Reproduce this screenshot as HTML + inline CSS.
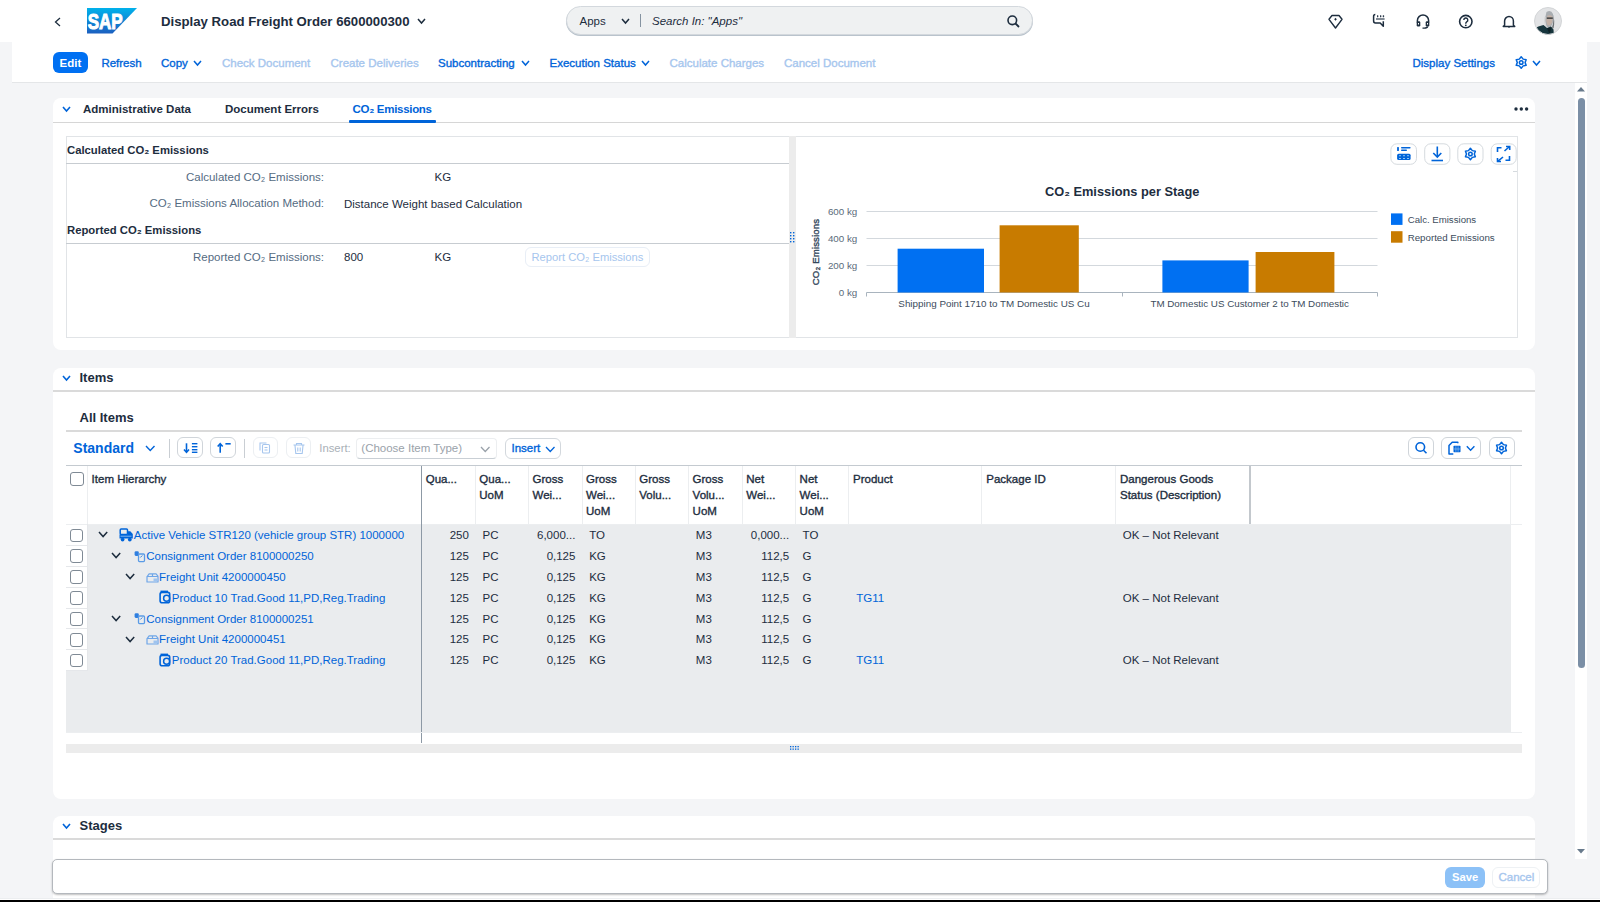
<!DOCTYPE html>
<html><head><meta charset="utf-8">
<style>
*{box-sizing:border-box;margin:0;padding:0}
html,body{width:1600px;height:902px;overflow:hidden}
body{position:relative;background:#f4f5f7;font-family:"Liberation Sans",sans-serif;color:#1d2d3e;font-size:11.5px}
.a{position:absolute}
.t{position:absolute;white-space:nowrap;line-height:1}
.sb{-webkit-text-stroke:0.35px currentColor}
.lnk{color:#0064d9}
.dis{color:#a6c6ee}
.lbl{color:#556b82}
.b{font-weight:bold}
svg{position:absolute;overflow:visible}
</style></head><body>

<!-- SHELL BAR -->
<div class="a" style="left:0;top:0;width:1600px;height:42px;background:#fff"></div>
<svg style="left:54px;top:17px" width="8" height="10"><polyline points="6,1 1.5,5 6,9" fill="none" stroke="#1d2d3e" stroke-width="1.3"/></svg>
<svg style="left:87px;top:8px" width="50" height="26">
 <defs><linearGradient id="sapg" x1="0" y1="0" x2="0" y2="1"><stop offset="0" stop-color="#00b1eb"/><stop offset="1" stop-color="#1c5fc0"/></linearGradient></defs>
 <polygon points="0,0 50,0 25.5,25.5 0,25.5" fill="url(#sapg)"/>
 <text x="0.7" y="21" font-family="Liberation Sans" font-weight="bold" font-size="22" fill="#fff" stroke="#fff" stroke-width="1" textLength="35" lengthAdjust="spacingAndGlyphs">SAP</text>
</svg>
<div class="t b" style="left:161px;top:15px;font-size:13.2px;color:#1d2d3e">Display Road Freight Order 6600000300</div>
<svg style="left:417px;top:18px" width="10" height="7"><polyline points="1,1 4.5,5 8,1" fill="none" stroke="#1d2d3e" stroke-width="1.5"/></svg>

<!-- search -->
<div class="a" style="left:566px;top:6px;width:467px;height:29.2px;border-radius:15px;background:#eff1f2;border:1px solid #d3d8dd;box-shadow:0 1px 0 #b9c3cc"></div>
<div class="t" style="left:579.5px;top:16px;font-size:11.5px">Apps</div>
<svg style="left:621px;top:18px" width="10" height="7"><polyline points="1,1 4.5,5 8,1" fill="none" stroke="#1d2d3e" stroke-width="1.5"/></svg>
<div class="a" style="left:640px;top:14px;width:1.2px;height:13px;background:#8593a1"></div>
<div class="t" style="left:652px;top:16px;font-size:11.5px;font-style:italic;color:#1d2d3e">Search In: "Apps"</div>
<svg style="left:1007px;top:15px" width="13" height="13"><circle cx="5.3" cy="5.3" r="4.3" fill="none" stroke="#1d2d3e" stroke-width="1.6"/><line x1="8.5" y1="8.5" x2="12" y2="12" stroke="#1d2d3e" stroke-width="1.8"/></svg>

<!-- shell icons -->
<svg style="left:1328px;top:14px" width="16" height="16"><path d="M4 1.5h7l3 3.8L7.5 14 1 5.3z" fill="none" stroke="#1d2d3e" stroke-width="1.4" stroke-linejoin="round"/><path d="M7.5 3.8l1.3 1.5-1.3 1.5-1.3-1.5z" fill="#1d2d3e"/></svg>
<svg style="left:1372px;top:13px" width="15" height="15"><path d="M3.3 1.4Q1.6 1.4 1.6 3.2V8.1Q1.6 10 3.4 10H8.2L11.3 13.3V8.3" fill="none" stroke="#1d2d3e" stroke-width="1.5" stroke-linejoin="round"/><path d="M4 6h8.6" stroke="#1d2d3e" stroke-width="1.1"/><path d="M5 3.2h1.4M8 3.2h1.4M10.8 3.2h1.4M5.6 2.3v2M8.6 2.3v2M11.4 2.3v2" stroke="#1d2d3e" stroke-width=".9"/></svg>
<svg style="left:1416px;top:14px" width="14" height="16"><path d="M1.4 8.5V6.6a5.6 5.6 0 0 1 11.2 0V8.5" fill="none" stroke="#1d2d3e" stroke-width="1.5"/><rect x="0.7" y="7.3" width="3.6" height="5.2" rx="1.2" fill="#1d2d3e"/><rect x="9.7" y="7.3" width="3.6" height="5.2" rx="1.2" fill="#1d2d3e"/><rect x="2" y="9" width="1" height="1.5" fill="#fff"/><rect x="11" y="9" width="1" height="1.5" fill="#fff"/><path d="M11.7 12.5q-.5 1.6-3.4 1.6H6.5" fill="none" stroke="#1d2d3e" stroke-width="1.4"/></svg>
<svg style="left:1458px;top:14px" width="16" height="16"><circle cx="7.8" cy="7.6" r="6.2" fill="none" stroke="#1d2d3e" stroke-width="1.6"/><path d="M5.8 6a2 2 0 1 1 2.9 1.8c-.7.4-.9.8-.9 1.5v.5" fill="none" stroke="#1d2d3e" stroke-width="1.4"/><circle cx="7.8" cy="11.3" r=".9" fill="#1d2d3e"/></svg>
<svg style="left:1502px;top:14px" width="14" height="16"><path d="M2.6 11.3V7a4.4 4.4 0 0 1 8.8 0v4.3l1.3 1.1H1.3z" fill="none" stroke="#1d2d3e" stroke-width="1.5" stroke-linejoin="round"/><path d="M5.5 12.6l1.5 1.5 1.5-1.5z" fill="#1d2d3e"/></svg>
<svg style="left:1533.5px;top:7px" width="28" height="28"><defs><clipPath id="av"><circle cx="14" cy="14" r="13.5"/></clipPath></defs><g clip-path="url(#av)"><rect width="28" height="28" fill="#e2e3e5"/><path d="M12.5 5q4.5-2.5 6.5 2 .8 4-.2 9l-2.5 5-4-1.5-1.8-6z" fill="#a9adb1"/><path d="M13.5 8.5q3.5-.8 5 1.2l-.3 5.5-2.2 3.5-2.8-1-1-4.5z" fill="#c4b2a8"/><path d="M12.8 11.2h6" stroke="#23282c" stroke-width="1.3"/><path d="M11 10q-1 5 1.5 11" stroke="#d8d8d8" stroke-width="1.5" fill="none"/><path d="M0 22q4-3 9.5-4l3.5 3 4-1.5 2.5 3 .5 7.5H0z" fill="#17353d"/><path d="M13 21l2.5 6 2-6.5z" fill="#0f2228"/><path d="M18.7 6.5q1.8 6-.7 14l1.5 1q1.8-8-.8-15z" fill="#6f7478"/></g><circle cx="14" cy="14" r="13.5" fill="none" stroke="#d3d5d7" stroke-width="1"/></svg>

<!-- TOOLBAR -->
<div class="a" style="left:12px;top:42px;width:1575px;height:41px;background:#fff;border-bottom:1px solid #e4e6e8"></div>
<div class="a" style="left:52.5px;top:52px;width:35px;height:21px;border-radius:6px;background:#0070f2"></div>
<div class="t b" style="left:59.5px;top:58px;font-size:11.5px;color:#fff">Edit</div>
<div class="t lnk sb" style="left:101.4px;top:58px">Refresh</div>
<div class="t lnk sb" style="left:161px;top:58px">Copy</div>
<svg style="left:193px;top:60px" width="10" height="7"><polyline points="1,1 4.5,5 8,1" fill="none" stroke="#0064d9" stroke-width="1.5"/></svg>
<div class="t dis sb" style="left:222px;top:58px">Check Document</div>
<div class="t dis sb" style="left:330.5px;top:58px">Create Deliveries</div>
<div class="t lnk sb" style="left:438px;top:58px">Subcontracting</div>
<svg style="left:520.5px;top:60px" width="10" height="7"><polyline points="1,1 4.5,5 8,1" fill="none" stroke="#0064d9" stroke-width="1.5"/></svg>
<div class="t lnk sb" style="left:549.5px;top:58px">Execution Status</div>
<svg style="left:641px;top:60px" width="10" height="7"><polyline points="1,1 4.5,5 8,1" fill="none" stroke="#0064d9" stroke-width="1.5"/></svg>
<div class="t dis sb" style="left:669.5px;top:58px">Calculate Charges</div>
<div class="t dis sb" style="left:784px;top:58px">Cancel Document</div>
<div class="t lnk sb" style="left:1412.5px;top:58px">Display Settings</div>
<svg style="left:1514px;top:55px" width="15" height="15"><g transform="translate(7.2,7.5)" fill="none" stroke="#0064d9" stroke-width="1.5" stroke-linejoin="round"><circle r="1.8"/><path d="M0.00 -5.70 L1.95 -3.38 L4.94 -2.85 L3.90 0.00 L4.94 2.85 L1.95 3.38 L0.00 5.70 L-1.95 3.38 L-4.94 2.85 L-3.90 0.00 L-4.94 -2.85 L-1.95 -3.38Z"/></g></svg>
<svg style="left:1532px;top:60px" width="10" height="7"><polyline points="1,1 4.5,5 8,1" fill="none" stroke="#0064d9" stroke-width="1.5"/></svg>

<!-- right scrollbar -->
<div class="a" style="left:1575px;top:83px;width:12px;height:776px;background:#fff"></div>
<svg style="left:1577px;top:87px" width="9" height="5"><polygon points="4,0 8,4.5 0,4.5" fill="#687a8c"/></svg>
<div class="a" style="left:1577.5px;top:97.5px;width:7.5px;height:570px;border-radius:4px;background:#7b8fa6"></div>
<svg style="left:1577px;top:849px" width="9" height="5"><polygon points="0,0 8,0 4,4.5" fill="#687a8c"/></svg>

<!-- CARD 1 -->
<div class="a" style="left:52.5px;top:98.3px;width:1482px;height:252.2px;background:#fff;border-radius:8px"></div>
<div class="a" style="left:52.5px;top:121.8px;width:1482px;height:1.4px;background:#d6d6d6"></div>
<svg style="left:62px;top:106.3px" width="10" height="6"><polyline points="1,1 4.5,5 8,1" fill="none" stroke="#0064d9" stroke-width="1.6"/></svg>
<div class="t b" style="left:83px;top:104px;font-size:11.5px">Administrative Data</div>
<div class="t b" style="left:225px;top:104px;font-size:11.5px">Document Errors</div>
<div class="t b lnk" style="left:352.5px;top:104px;font-size:11.5px;letter-spacing:-0.3px">CO₂ Emissions</div>
<div class="a" style="left:349px;top:119.8px;width:86.5px;height:3px;background:#0064d9;border-radius:1px"></div>
<svg style="left:1514px;top:107px" width="15" height="4"><circle cx="2" cy="2" r="1.7" fill="#1d2d3e"/><circle cx="7.3" cy="2" r="1.7" fill="#1d2d3e"/><circle cx="12.6" cy="2" r="1.7" fill="#1d2d3e"/></svg>

<!-- form panel -->
<div class="a" style="left:66px;top:136px;width:724px;height:202px;border:1px solid #e1e4e7;border-right:none"></div>
<div class="t b" style="left:67px;top:145px;font-size:11.3px">Calculated CO₂ Emissions</div>
<div class="a" style="left:66px;top:162.5px;width:724px;height:1px;background:#c7ccd1"></div>
<div class="t lbl" style="right:1276px;top:171.7px;font-size:11.5px">Calculated CO₂ Emissions:</div>
<div class="t" style="left:434.5px;top:171.7px">KG</div>
<div class="t lbl" style="right:1276px;top:198.2px;font-size:11.5px">CO₂ Emissions Allocation Method:</div>
<div class="t" style="left:344px;top:198.9px">Distance Weight based Calculation</div>
<div class="t b" style="left:67px;top:225px;font-size:11.3px">Reported CO₂ Emissions</div>
<div class="a" style="left:66px;top:243px;width:724px;height:1px;background:#c7ccd1"></div>
<div class="t lbl" style="right:1276px;top:251.7px;font-size:11.5px">Reported CO₂ Emissions:</div>
<div class="t" style="left:344px;top:251.7px">800</div>
<div class="t" style="left:434.5px;top:251.7px">KG</div>
<div class="a" style="left:524.5px;top:247px;width:125px;height:20px;border:1px solid #e8eef6;border-radius:6px"></div>
<div class="t dis" style="left:531.5px;top:251.7px;font-size:11.2px">Report CO₂ Emissions</div>
<!-- splitter -->
<div class="a" style="left:789.2px;top:136px;width:6.4px;height:202px;background:#ececec"></div>
<svg style="left:790.3px;top:232px" width="6" height="11"><g fill="#0064d9"><rect x="0" y="0" width="1.4" height="1.4"/><rect x="3" y="0" width="1.4" height="1.4"/><rect x="0" y="3" width="1.4" height="1.4"/><rect x="3" y="3" width="1.4" height="1.4"/><rect x="0" y="6" width="1.4" height="1.4"/><rect x="3" y="6" width="1.4" height="1.4"/><rect x="0" y="9" width="1.4" height="1.4"/><rect x="3" y="9" width="1.4" height="1.4"/></g></svg>

<!-- chart panel -->
<div class="a" style="left:795.5px;top:136px;width:722.5px;height:202px;border:1px solid #e1e4e7;border-left:none"></div>
<svg style="left:0;top:0" width="1600" height="902">
<rect x="1390.9" y="143.8" width="25.59999999999991" height="20.5" rx="6" fill="#fff" stroke="#d5dade" stroke-width="1"/>
<rect x="1424.7" y="143.8" width="25.200000000000045" height="20.5" rx="6" fill="#fff" stroke="#d5dade" stroke-width="1"/>
<rect x="1457.8" y="143.8" width="25.200000000000045" height="20.5" rx="6" fill="#fff" stroke="#d5dade" stroke-width="1"/>
<rect x="1491.2" y="143.8" width="25.0" height="20.5" rx="6" fill="#fff" stroke="#d5dade" stroke-width="1"/>
<g fill="#0064d9"><rect x="1397.1" y="147" width="1.8" height="3.9" rx=".5"/><rect x="1401" y="147" width="9.6" height="1.5" rx=".7"/><rect x="1401" y="149.6" width="6" height="1.4" rx=".7"/><rect x="1397.1" y="153.7" width="13.5" height="6.3" rx="1.5"/></g>
<g fill="#9fd0f5"><rect x="1399" y="155.3" width="2" height=".9"/><rect x="1403" y="155.3" width="2" height=".9"/><rect x="1407" y="155.3" width="2" height=".9"/><rect x="1399" y="158" width="2" height=".9"/><rect x="1403" y="158" width="2" height=".9"/><rect x="1407" y="158" width="2" height=".9"/></g>
<g stroke="#0064d9" stroke-width="1.6" fill="none"><line x1="1437.3" y1="146.5" x2="1437.3" y2="157"/><polyline points="1433.3,153 1437.3,157 1441.3,153"/><line x1="1431.5" y1="160.5" x2="1443" y2="160.5"/></g>
<g transform="translate(1470.4,154)" fill="none" stroke="#0064d9" stroke-width="1.5"><circle r="1.8"/><path d="M0.00 -5.70 L1.95 -3.38 L4.94 -2.85 L3.90 0.00 L4.94 2.85 L1.95 3.38 L0.00 5.70 L-1.95 3.38 L-4.94 2.85 L-3.90 0.00 L-4.94 -2.85 L-1.95 -3.38Z" stroke-linejoin="round"/></g>
<g stroke="#0064d9" stroke-width="1.6" fill="none"><polyline points="1497.5,152 1497.5,147.8 1501.5,147.8"/><polyline points="1509.5,156 1509.5,160.3 1505.5,160.3"/><line x1="1504.5" y1="151" x2="1509.5" y2="146.5"/><polyline points="1506,146.5 1509.7,146.5 1509.7,150"/><line x1="1503" y1="157" x2="1497.7" y2="161.3"/><polyline points="1497.5,158 1497.5,161.5 1501,161.5"/></g>
<line x1="1513" y1="171.5" x2="1517" y2="171.5" stroke="#d5dade" stroke-width="1"/>
<text x="1045" y="196" font-family="Liberation Sans" font-weight="bold" font-size="12.8" fill="#1d2d3e">CO₂ Emissions per Stage</text>
<line x1="866.5" y1="211.5" x2="1377.5" y2="211.5" stroke="#d3d8dd" stroke-width="1"/>
<line x1="866.5" y1="238.5" x2="1377.5" y2="238.5" stroke="#d3d8dd" stroke-width="1"/>
<line x1="866.5" y1="265.5" x2="1377.5" y2="265.5" stroke="#d3d8dd" stroke-width="1"/>
<line x1="866.5" y1="292.5" x2="1377.5" y2="292.5" stroke="#a9b4be" stroke-width="1"/>
<line x1="866.5" y1="292.5" x2="866.5" y2="296.5" stroke="#a9b4be" stroke-width="1"/>
<line x1="1122.5" y1="292.5" x2="1122.5" y2="296.5" stroke="#a9b4be" stroke-width="1"/>
<line x1="1377.5" y1="292.5" x2="1377.5" y2="296.5" stroke="#a9b4be" stroke-width="1"/>
<text x="857.3" y="214.8" text-anchor="end" font-family="Liberation Sans" font-size="9.8" fill="#5b6b7b">600 kg</text>
<text x="857.3" y="241.8" text-anchor="end" font-family="Liberation Sans" font-size="9.8" fill="#5b6b7b">400 kg</text>
<text x="857.3" y="268.8" text-anchor="end" font-family="Liberation Sans" font-size="9.8" fill="#5b6b7b">200 kg</text>
<text x="857.3" y="295.8" text-anchor="end" font-family="Liberation Sans" font-size="9.8" fill="#5b6b7b">0 kg</text>
<text transform="translate(818.5,252) rotate(-90)" text-anchor="middle" font-family="Liberation Sans" font-size="9.6" fill="#33475b" stroke="#33475b" stroke-width="0.35" letter-spacing="0.15">CO₂ Emissions</text>
<rect x="897.6" y="248.7" width="86.4" height="43.8" fill="#0070f2"/>
<rect x="999.6" y="225.3" width="79.2" height="67.2" fill="#c87b00"/>
<rect x="1162.4" y="260.4" width="86.2" height="32.1" fill="#0070f2"/>
<rect x="1255.6" y="252" width="78.8" height="40.5" fill="#c87b00"/>
<text x="994" y="306.7" text-anchor="middle" font-family="Liberation Sans" font-size="9.85" fill="#3c4c5c">Shipping Point 1710 to TM Domestic US Cu</text>
<text x="1249.7" y="306.7" text-anchor="middle" font-family="Liberation Sans" font-size="9.8" fill="#3c4c5c">TM Domestic US Customer 2 to TM Domestic</text>
<rect x="1391" y="213.4" width="11.5" height="11.5" fill="#0070f2"/>
<rect x="1391" y="231.2" width="11.5" height="11.5" fill="#c87b00"/>
<text x="1407.7" y="222.8" font-family="Liberation Sans" font-size="9.65" fill="#3c4c5c">Calc. Emissions</text>
<text x="1407.7" y="240.6" font-family="Liberation Sans" font-size="9.73" fill="#3c4c5c">Reported Emissions</text>
</svg>

<!-- CARD 2 : Items -->
<div class="a" style="left:52.5px;top:367.5px;width:1482px;height:431.5px;background:#fff;border-radius:8px"></div>
<div class="a" style="left:52.5px;top:390px;width:1482px;height:2px;background:#dadada"></div>
<svg style="left:61.5px;top:375px" width="10" height="6"><polyline points="1,1 4.5,5 8,1" fill="none" stroke="#0064d9" stroke-width="1.6"/></svg>
<div class="t b" style="left:79.5px;top:371.2px;font-size:13px">Items</div>
<div class="t b" style="left:79.5px;top:411.2px;font-size:13px">All Items</div>
<div class="a" style="left:66px;top:430.3px;width:1455.5px;height:1.7px;background:#dadada"></div>
<div class="t b" style="left:73.3px;top:441px;font-size:14px;color:#0064d9">Standard</div>
<svg style="left:144.5px;top:445px" width="10.5" height="6.5"><polyline points="1,1 5.25,5.5 9.5,1" fill="none" stroke="#0064d9" stroke-width="1.4"/></svg>
<div class="a" style="left:169px;top:438.5px;width:1px;height:19px;background:#c9ced3"></div>
<div class="a" style="left:244px;top:438.5px;width:1px;height:19px;background:#c9ced3"></div>
<div class="a" style="left:177.2px;top:437.2px;width:26.200000000000017px;height:21.3px;border:1px solid #d0d5da;border-radius:6px"></div>
<div class="a" style="left:210.2px;top:437.2px;width:26.100000000000023px;height:21.3px;border:1px solid #d0d5da;border-radius:6px"></div>
<div class="a" style="left:253px;top:437.2px;width:25px;height:21.3px;border:1px solid #eceff2;border-radius:6px"></div>
<div class="a" style="left:285.9px;top:437.2px;width:25.5px;height:21.3px;border:1px solid #eceff2;border-radius:6px"></div>
<svg style="left:0;top:0" width="1600" height="902">
<g stroke="#0064d9" stroke-width="1.6" fill="none"><line x1="186.5" y1="443.3" x2="186.5" y2="452"/><polyline points="184,449.5 186.5,452.3 189,449.5"/></g>
<g fill="#0064d9"><rect x="191.9" y="443" width="5.5" height="1.4"/><rect x="191.9" y="446" width="5.5" height="1.4"/><rect x="191.9" y="449" width="5.5" height="1.4"/><rect x="191.9" y="451.6" width="5.5" height="1.4"/></g>
<g stroke="#0064d9" stroke-width="1.6" fill="none"><line x1="220.2" y1="444" x2="220.2" y2="452.8"/><polyline points="217.7,446.5 220.2,443.7 222.7,446.5"/><line x1="225.4" y1="443.8" x2="230.7" y2="443.8"/></g>
<g stroke="#a6c6ee" stroke-width="1.1" fill="none"><rect x="262.5" y="444.5" width="7" height="8.5" rx="1"/><path d="M260 450.5v-7.5h6.5"/><line x1="264.5" y1="447.5" x2="267.5" y2="447.5"/><line x1="264.5" y1="450" x2="267.5" y2="450"/></g>
<g stroke="#a6c6ee" stroke-width="1.1" fill="none"><path d="M293.5 445h11M296.5 445v-1.5h5v1.5M295 445.5l.8 8h6.4l.8-8M297.8 447.5v4M300.2 447.5v4"/></g>
</svg>
<div class="t" style="left:319.3px;top:443px;font-size:11.3px;color:#a9b0b7">Insert:</div>
<div class="a" style="left:355.7px;top:437.5px;width:141px;height:21px;border:1px solid #eceef0;border-radius:4px;border-bottom-color:#c9cfd5"></div>
<div class="t" style="left:361.3px;top:443px;font-size:11.5px;color:#9aa2aa">(Choose Item Type)</div>
<svg style="left:479.8px;top:445.5px" width="10.5" height="6.5"><polyline points="1,1 5.25,5.5 9.5,1" fill="none" stroke="#9aa2aa" stroke-width="1.3"/></svg>
<div class="a" style="left:504.8px;top:437.5px;width:56.7px;height:21px;border:1px solid #d3d8dd;border-radius:6px"></div>
<div class="t lnk sb" style="left:511.5px;top:443px;font-size:11.5px">Insert</div>
<svg style="left:545.3px;top:446px" width="10.5" height="6.5"><polyline points="1,1 5.25,5.5 9.5,1" fill="none" stroke="#0064d9" stroke-width="1.3"/></svg>
<div class="a" style="left:1408.2px;top:437px;width:26.0px;height:22px;border:1px solid #d0d5da;border-radius:6px"></div>
<div class="a" style="left:1441.4px;top:437px;width:40.0px;height:22px;border:1px solid #d0d5da;border-radius:6px"></div>
<div class="a" style="left:1488.5px;top:437px;width:26.0px;height:22px;border:1px solid #d0d5da;border-radius:6px"></div>
<svg style="left:0;top:0" width="1600" height="902">
<g stroke="#0064d9" stroke-width="1.6" fill="none"><circle cx="1420.3" cy="447" r="4.3"/><line x1="1423.5" y1="450.2" x2="1426.5" y2="453.2"/></g>
<g fill="none" stroke="#0064d9" stroke-width="1.5" stroke-linejoin="round"><path d="M1457.8 443.3V442.3H1452.2L1449 445.6V454H1453.3"/></g><rect x="1453.5" y="445.8" width="7" height="6.4" rx=".6" fill="#0064d9"/><g stroke="#8fc2f3" stroke-width=".7"><line x1="1454" y1="449" x2="1460" y2="449"/><line x1="1455.9" y1="446.3" x2="1455.9" y2="451.8"/><line x1="1458.1" y1="446.3" x2="1458.1" y2="451.8"/></g>
<polyline points="1466.8,446.3 1470.6,450.2 1474.4,446.3" fill="none" stroke="#0064d9" stroke-width="1.4"/>
<g transform="translate(1501.5,448)" fill="none" stroke="#0064d9" stroke-width="1.5"><circle r="1.8"/><path d="M0.00 -5.70 L1.95 -3.38 L4.94 -2.85 L3.90 0.00 L4.94 2.85 L1.95 3.38 L0.00 5.70 L-1.95 3.38 L-4.94 2.85 L-3.90 0.00 L-4.94 -2.85 L-1.95 -3.38Z" stroke-linejoin="round"/></g>
</svg>
<div class="a" style="left:66px;top:465.0px;width:1455.5px;height:1px;background:#c4cad0"></div>
<div class="a" style="left:87.3px;top:524.4px;width:1423.3px;height:208.30000000000007px;background:#eaecee"></div>
<div class="a" style="left:66px;top:524.4px;width:21.3px;height:146.29999999999998px;background:#fff"></div>
<div class="a" style="left:66px;top:670.6999999999999px;width:21.3px;height:62.000000000000085px;background:#eaecee"></div>
<div class="a" style="left:66px;top:523.9px;width:21.3px;height:1px;background:#e5e7ea"></div>
<div class="a" style="left:66px;top:544.8px;width:21.3px;height:1px;background:#e5e7ea"></div>
<div class="a" style="left:66px;top:565.6999999999999px;width:21.3px;height:1px;background:#e5e7ea"></div>
<div class="a" style="left:66px;top:586.6px;width:21.3px;height:1px;background:#e5e7ea"></div>
<div class="a" style="left:66px;top:607.5px;width:21.3px;height:1px;background:#e5e7ea"></div>
<div class="a" style="left:66px;top:628.4px;width:21.3px;height:1px;background:#e5e7ea"></div>
<div class="a" style="left:66px;top:649.3px;width:21.3px;height:1px;background:#e5e7ea"></div>
<div class="a" style="left:66px;top:670.1999999999999px;width:21.3px;height:1px;background:#e5e7ea"></div>
<div class="a" style="left:66px;top:523.9px;width:1455.5px;height:1px;background:#eceef0"></div>
<div class="a" style="left:86.8px;top:465.5px;width:1px;height:58.89999999999998px;background:#eceef0"></div>
<div class="a" style="left:474.5px;top:465.5px;width:1px;height:58.89999999999998px;background:#eceef0"></div>
<div class="a" style="left:527.8px;top:465.5px;width:1px;height:58.89999999999998px;background:#eceef0"></div>
<div class="a" style="left:581.5px;top:465.5px;width:1px;height:58.89999999999998px;background:#eceef0"></div>
<div class="a" style="left:634.5px;top:465.5px;width:1px;height:58.89999999999998px;background:#eceef0"></div>
<div class="a" style="left:687.7px;top:465.5px;width:1px;height:58.89999999999998px;background:#eceef0"></div>
<div class="a" style="left:741.7px;top:465.5px;width:1px;height:58.89999999999998px;background:#eceef0"></div>
<div class="a" style="left:794.7px;top:465.5px;width:1px;height:58.89999999999998px;background:#eceef0"></div>
<div class="a" style="left:848.1px;top:465.5px;width:1px;height:58.89999999999998px;background:#eceef0"></div>
<div class="a" style="left:981.4px;top:465.5px;width:1px;height:58.89999999999998px;background:#eceef0"></div>
<div class="a" style="left:1115.25px;top:465.5px;width:1px;height:58.89999999999998px;background:#eceef0"></div>
<div class="a" style="left:1510.1px;top:465.5px;width:1px;height:58.89999999999998px;background:#eceef0"></div>
<div class="a" style="left:1249.4px;top:465.5px;width:1.3px;height:58.89999999999998px;background:#c3c8cd"></div>
<div class="a" style="left:421px;top:465.5px;width:1.2px;height:277.79999999999995px;background:#8d99a5"></div>
<div class="a" style="left:86.8px;top:524.4px;width:1px;height:146.29999999999998px;background:#e5e7ea"></div>
<div class="a" style="left:66px;top:732.2px;width:1455.5px;height:1px;background:#eceef0"></div>
<div class="a" style="left:66px;top:743.5px;width:1455.5px;height:9px;background:#ececec"></div>
<svg style="left:789.5px;top:746px" width="9" height="4"><g fill="#0064d9"><rect x="0" y="0" width="1.3" height="1.3"/><rect x="2.5" y="0" width="1.3" height="1.3"/><rect x="5" y="0" width="1.3" height="1.3"/><rect x="7.5" y="0" width="1.3" height="1.3"/><rect x="0" y="2.5" width="1.3" height="1.3"/><rect x="2.5" y="2.5" width="1.3" height="1.3"/><rect x="5" y="2.5" width="1.3" height="1.3"/><rect x="7.5" y="2.5" width="1.3" height="1.3"/></g></svg>
<div class="a" style="left:70.2px;top:472.3px;width:13.5px;height:13.5px;border:1px solid #7f8a95;border-radius:3px;background:#fff"></div>
<div class="t sb" style="left:91.6px;top:473.8px;font-size:11.5px">Item Hierarchy</div>
<div class="t sb" style="left:425.7px;top:473.8px;font-size:11.5px">Qua...</div>
<div class="t sb" style="left:479.3px;top:473.8px;font-size:11.5px">Qua...</div>
<div class="t sb" style="left:479.3px;top:489.90000000000003px;font-size:11.5px">UoM</div>
<div class="t sb" style="left:532.5px;top:473.8px;font-size:11.5px">Gross</div>
<div class="t sb" style="left:532.5px;top:489.90000000000003px;font-size:11.5px">Wei...</div>
<div class="t sb" style="left:586px;top:473.8px;font-size:11.5px">Gross</div>
<div class="t sb" style="left:586px;top:489.90000000000003px;font-size:11.5px">Wei...</div>
<div class="t sb" style="left:586px;top:506.0px;font-size:11.5px">UoM</div>
<div class="t sb" style="left:639.3px;top:473.8px;font-size:11.5px">Gross</div>
<div class="t sb" style="left:639.3px;top:489.90000000000003px;font-size:11.5px">Volu...</div>
<div class="t sb" style="left:692.6px;top:473.8px;font-size:11.5px">Gross</div>
<div class="t sb" style="left:692.6px;top:489.90000000000003px;font-size:11.5px">Volu...</div>
<div class="t sb" style="left:692.6px;top:506.0px;font-size:11.5px">UoM</div>
<div class="t sb" style="left:746.3px;top:473.8px;font-size:11.5px">Net</div>
<div class="t sb" style="left:746.3px;top:489.90000000000003px;font-size:11.5px">Wei...</div>
<div class="t sb" style="left:799.6px;top:473.8px;font-size:11.5px">Net</div>
<div class="t sb" style="left:799.6px;top:489.90000000000003px;font-size:11.5px">Wei...</div>
<div class="t sb" style="left:799.6px;top:506.0px;font-size:11.5px">UoM</div>
<div class="t sb" style="left:853px;top:473.8px;font-size:11.5px">Product</div>
<div class="t sb" style="left:986.3px;top:473.8px;font-size:11.5px">Package ID</div>
<div class="t sb" style="left:1120px;top:473.8px;font-size:11.5px">Dangerous Goods</div>
<div class="t sb" style="left:1120px;top:489.90000000000003px;font-size:11.5px">Status (Description)</div>
<div class="a" style="left:69.8px;top:528.5px;width:13.5px;height:13.5px;border:1px solid #7f8a95;border-radius:3px;background:#fff"></div>
<svg style="left:97.80000000000001px;top:531.4px" width="10.2" height="6.6"><polyline points="1,1 5.1,5.6 9.2,1" fill="none" stroke="#1d2d3e" stroke-width="1.5"/></svg>
<svg style="left:118.9px;top:527.6999999999999px" width="15" height="14"><rect x="1.2" y="0.9" width="7.3" height="5.6" rx="1" fill="none" stroke="#0064d9" stroke-width="1.5"/><path d="M8.5 3.2h2.8l2.5 2.8v4.5H0.5V6.5h8z" fill="#0064d9"/><rect x="1.5" y="7.7" width="11" height="1" fill="#7fb5ef"/><circle cx="3.6" cy="11.6" r="1.9" fill="#0064d9"/><circle cx="10.8" cy="11.6" r="1.9" fill="#0064d9"/></svg>
<div class="t lnk" style="left:133.8px;top:529.9px">Active Vehicle STR120 (vehicle group STR) 1000000</div>
<div class="t" style="right:1131.2px;top:529.9px">250</div>
<div class="t" style="left:482.6px;top:529.9px">PC</div>
<div class="t" style="right:1024.6px;top:529.9px">6,000...</div>
<div class="t" style="left:589.2px;top:529.9px">TO</div>
<div class="t" style="left:695.8px;top:529.9px">M3</div>
<div class="t" style="right:810.8px;top:529.9px">0,000...</div>
<div class="t" style="left:802.6px;top:529.9px">TO</div>
<div class="t" style="left:1122.8px;top:529.9px">OK – Not Relevant</div>
<div class="a" style="left:69.8px;top:549.4px;width:13.5px;height:13.5px;border:1px solid #7f8a95;border-radius:3px;background:#fff"></div>
<svg style="left:111.30000000000001px;top:552.3px" width="10.2" height="6.6"><polyline points="1,1 5.1,5.6 9.2,1" fill="none" stroke="#1d2d3e" stroke-width="1.5"/></svg>
<svg style="left:133.5px;top:548.5999999999999px" width="12" height="14"><rect x="0.6" y="2.3" width="4.2" height="4.6" rx="1.3" fill="#2f7fe0"/><rect x="4.5" y="5" width="6" height="7.6" rx="1" fill="none" stroke="#5a9be6" stroke-width="1.3"/><path d="M6.3 8.5l2-2" stroke="#2f7fe0" stroke-width="1"/></svg>
<div class="t lnk" style="left:146.2px;top:550.8px">Consignment Order 8100000250</div>
<div class="t" style="right:1131.2px;top:550.8px">125</div>
<div class="t" style="left:482.6px;top:550.8px">PC</div>
<div class="t" style="right:1024.6px;top:550.8px">0,125</div>
<div class="t" style="left:589.2px;top:550.8px">KG</div>
<div class="t" style="left:695.8px;top:550.8px">M3</div>
<div class="t" style="right:810.8px;top:550.8px">112,5</div>
<div class="t" style="left:802.6px;top:550.8px">G</div>
<div class="a" style="left:69.8px;top:570.3px;width:13.5px;height:13.5px;border:1px solid #7f8a95;border-radius:3px;background:#fff"></div>
<svg style="left:124.80000000000001px;top:573.1999999999999px" width="10.2" height="6.6"><polyline points="1,1 5.1,5.6 9.2,1" fill="none" stroke="#1d2d3e" stroke-width="1.5"/></svg>
<svg style="left:145.6px;top:569.4999999999999px" width="14" height="13"><g fill="none" stroke="#6fa6e8" stroke-width="1.2" stroke-linejoin="round"><path d="M1 6.5h11v5.5H1z"/><path d="M1.3 6.3l1.8-2.5h3.4M6.5 6.5V3.8h3.6l2 2.5"/></g><rect x="7.5" y="8.5" width="4" height="3" fill="#9fc4ef"/></svg>
<div class="t lnk" style="left:159.1px;top:571.6999999999999px">Freight Unit 4200000450</div>
<div class="t" style="right:1131.2px;top:571.6999999999999px">125</div>
<div class="t" style="left:482.6px;top:571.6999999999999px">PC</div>
<div class="t" style="right:1024.6px;top:571.6999999999999px">0,125</div>
<div class="t" style="left:589.2px;top:571.6999999999999px">KG</div>
<div class="t" style="left:695.8px;top:571.6999999999999px">M3</div>
<div class="t" style="right:810.8px;top:571.6999999999999px">112,5</div>
<div class="t" style="left:802.6px;top:571.6999999999999px">G</div>
<div class="a" style="left:69.8px;top:591.2px;width:13.5px;height:13.5px;border:1px solid #7f8a95;border-radius:3px;background:#fff"></div>
<svg style="left:159.1px;top:590.4px" width="13" height="14"><rect x="1.5" y="0.6" width="7.5" height="1.8" fill="#0064d9"/><rect x="1.1" y="2.4" width="9.6" height="10.4" rx="2" fill="none" stroke="#0064d9" stroke-width="1.6"/><circle cx="7.6" cy="8.3" r="3" fill="#eaecee" stroke="#0064d9" stroke-width="1.5"/></svg>
<div class="t lnk" style="left:171.8px;top:592.6px">Product 10 Trad.Good 11,PD,Reg.Trading</div>
<div class="t" style="right:1131.2px;top:592.6px">125</div>
<div class="t" style="left:482.6px;top:592.6px">PC</div>
<div class="t" style="right:1024.6px;top:592.6px">0,125</div>
<div class="t" style="left:589.2px;top:592.6px">KG</div>
<div class="t" style="left:695.8px;top:592.6px">M3</div>
<div class="t" style="right:810.8px;top:592.6px">112,5</div>
<div class="t" style="left:802.6px;top:592.6px">G</div>
<div class="t lnk" style="left:856.2px;top:592.6px">TG11</div>
<div class="t" style="left:1122.8px;top:592.6px">OK – Not Relevant</div>
<div class="a" style="left:69.8px;top:612.1px;width:13.5px;height:13.5px;border:1px solid #7f8a95;border-radius:3px;background:#fff"></div>
<svg style="left:111.30000000000001px;top:615.0px" width="10.2" height="6.6"><polyline points="1,1 5.1,5.6 9.2,1" fill="none" stroke="#1d2d3e" stroke-width="1.5"/></svg>
<svg style="left:133.5px;top:611.3px" width="12" height="14"><rect x="0.6" y="2.3" width="4.2" height="4.6" rx="1.3" fill="#2f7fe0"/><rect x="4.5" y="5" width="6" height="7.6" rx="1" fill="none" stroke="#5a9be6" stroke-width="1.3"/><path d="M6.3 8.5l2-2" stroke="#2f7fe0" stroke-width="1"/></svg>
<div class="t lnk" style="left:146.2px;top:613.5px">Consignment Order 8100000251</div>
<div class="t" style="right:1131.2px;top:613.5px">125</div>
<div class="t" style="left:482.6px;top:613.5px">PC</div>
<div class="t" style="right:1024.6px;top:613.5px">0,125</div>
<div class="t" style="left:589.2px;top:613.5px">KG</div>
<div class="t" style="left:695.8px;top:613.5px">M3</div>
<div class="t" style="right:810.8px;top:613.5px">112,5</div>
<div class="t" style="left:802.6px;top:613.5px">G</div>
<div class="a" style="left:69.8px;top:633.0px;width:13.5px;height:13.5px;border:1px solid #7f8a95;border-radius:3px;background:#fff"></div>
<svg style="left:124.80000000000001px;top:635.9px" width="10.2" height="6.6"><polyline points="1,1 5.1,5.6 9.2,1" fill="none" stroke="#1d2d3e" stroke-width="1.5"/></svg>
<svg style="left:145.6px;top:632.1999999999999px" width="14" height="13"><g fill="none" stroke="#6fa6e8" stroke-width="1.2" stroke-linejoin="round"><path d="M1 6.5h11v5.5H1z"/><path d="M1.3 6.3l1.8-2.5h3.4M6.5 6.5V3.8h3.6l2 2.5"/></g><rect x="7.5" y="8.5" width="4" height="3" fill="#9fc4ef"/></svg>
<div class="t lnk" style="left:159.1px;top:634.4px">Freight Unit 4200000451</div>
<div class="t" style="right:1131.2px;top:634.4px">125</div>
<div class="t" style="left:482.6px;top:634.4px">PC</div>
<div class="t" style="right:1024.6px;top:634.4px">0,125</div>
<div class="t" style="left:589.2px;top:634.4px">KG</div>
<div class="t" style="left:695.8px;top:634.4px">M3</div>
<div class="t" style="right:810.8px;top:634.4px">112,5</div>
<div class="t" style="left:802.6px;top:634.4px">G</div>
<div class="a" style="left:69.8px;top:653.9px;width:13.5px;height:13.5px;border:1px solid #7f8a95;border-radius:3px;background:#fff"></div>
<svg style="left:159.1px;top:653.0999999999999px" width="13" height="14"><rect x="1.5" y="0.6" width="7.5" height="1.8" fill="#0064d9"/><rect x="1.1" y="2.4" width="9.6" height="10.4" rx="2" fill="none" stroke="#0064d9" stroke-width="1.6"/><circle cx="7.6" cy="8.3" r="3" fill="#eaecee" stroke="#0064d9" stroke-width="1.5"/></svg>
<div class="t lnk" style="left:171.8px;top:655.3px">Product 20 Trad.Good 11,PD,Reg.Trading</div>
<div class="t" style="right:1131.2px;top:655.3px">125</div>
<div class="t" style="left:482.6px;top:655.3px">PC</div>
<div class="t" style="right:1024.6px;top:655.3px">0,125</div>
<div class="t" style="left:589.2px;top:655.3px">KG</div>
<div class="t" style="left:695.8px;top:655.3px">M3</div>
<div class="t" style="right:810.8px;top:655.3px">112,5</div>
<div class="t" style="left:802.6px;top:655.3px">G</div>
<div class="t lnk" style="left:856.2px;top:655.3px">TG11</div>
<div class="t" style="left:1122.8px;top:655.3px">OK – Not Relevant</div>

<!-- CARD 3 : Stages -->
<div class="a" style="left:52.5px;top:816px;width:1482px;height:100px;background:#fff;border-radius:8px"></div>
<div class="a" style="left:52.5px;top:837.7px;width:1482px;height:2px;background:#dadada"></div>
<svg style="left:61.5px;top:823px" width="10" height="6"><polyline points="1,1 4.5,5 8,1" fill="none" stroke="#0064d9" stroke-width="1.6"/></svg>
<div class="t b" style="left:79.5px;top:819.3px;font-size:13px">Stages</div>

<!-- footer -->
<div class="a" style="left:52px;top:859px;width:1495.7px;height:35.3px;background:#fff;border:1px solid #b4b8bd;border-radius:5px;box-shadow:0 1px 2px rgba(0,0,0,.25)"></div>
<div class="a" style="left:1445px;top:866.5px;width:40px;height:21px;border-radius:6px;background:#8cc1f7"></div>
<div class="t b" style="left:1452px;top:872px;font-size:11.2px;color:#fff">Save</div>
<div class="a" style="left:1492px;top:866.5px;width:48px;height:21px;border-radius:6px;border:1px solid #eef1f4"></div>
<div class="t dis sb" style="left:1498.5px;top:872px">Cancel</div>

<!-- bottom dark line -->
<div class="a" style="left:0;top:897.5px;width:1600px;height:1px;background:#eceef0"></div>
<div class="a" style="left:0;top:898.5px;width:1600px;height:1px;background:#fff"></div>
<div class="a" style="left:0;top:899.5px;width:1600px;height:2.5px;background:#000"></div>
</body></html>
